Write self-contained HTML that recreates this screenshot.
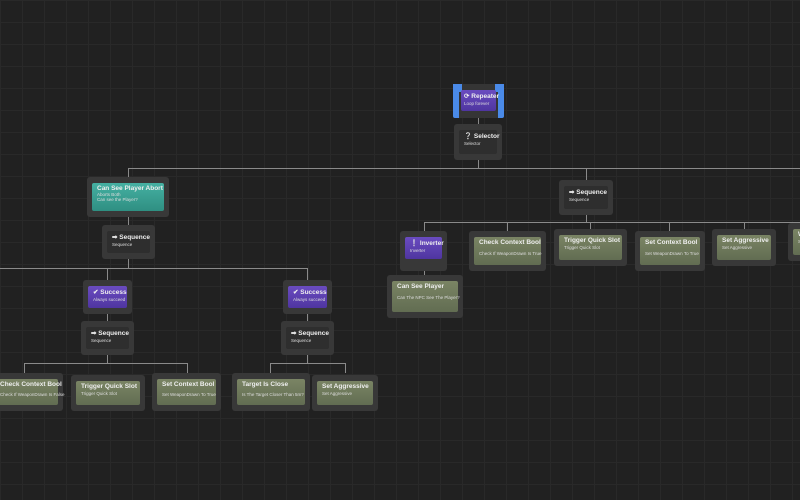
<!DOCTYPE html>
<html><head><meta charset="utf-8"><style>
body{margin:0;width:800px;height:500px;overflow:hidden;background:#212121;
background-image:linear-gradient(#292929 1px,transparent 1px),linear-gradient(90deg,#292929 1px,transparent 1px);
background-size:22px 22px;font-family:"Liberation Sans",sans-serif;position:relative}
.o{position:absolute;background:#383838;border-radius:3px}
.i{position:absolute;left:5px;right:5px;top:6px;bottom:6px;border-radius:2px;color:#eee;padding:2px 5px;box-sizing:border-box}
.t{font-size:6.5px;font-weight:bold;white-space:nowrap}
.s{font-size:4.5px;color:#ddd;white-space:nowrap;margin-top:1px}
.g{background:linear-gradient(#7a8464,#626d52)}
.d{background:#2e2e2e}
.p{background:linear-gradient(#6a4cc0,#4f35a0)}
.c{background:linear-gradient(#45b0a2,#2f8f82)}
.l{position:absolute;background:#8a8a8a}
</style></head><body>
<div class="l" style="left:478px;top:111px;width:1px;height:57px"></div>
<div class="l" style="left:128px;top:168px;width:672px;height:1px"></div>
<div class="l" style="left:128px;top:168px;width:1px;height:10px"></div>
<div class="l" style="left:586px;top:168px;width:1px;height:12px"></div>
<div class="l" style="left:128px;top:216px;width:1px;height:52px"></div>
<div class="l" style="left:0;top:268px;width:308px;height:1px"></div>
<div class="l" style="left:107px;top:268px;width:1px;height:12px"></div>
<div class="l" style="left:307px;top:268px;width:1px;height:12px"></div>
<div class="l" style="left:107px;top:313px;width:1px;height:50px"></div>
<div class="l" style="left:307px;top:313px;width:1px;height:50px"></div>
<div class="l" style="left:24px;top:363px;width:163px;height:1px"></div>
<div class="l" style="left:24px;top:363px;width:1px;height:10px"></div>
<div class="l" style="left:187px;top:363px;width:1px;height:10px"></div>
<div class="l" style="left:270px;top:363px;width:75px;height:1px"></div>
<div class="l" style="left:270px;top:363px;width:1px;height:10px"></div>
<div class="l" style="left:345px;top:363px;width:1px;height:10px"></div>
<div class="l" style="left:586px;top:214px;width:1px;height:8px"></div>
<div class="l" style="left:424px;top:222px;width:376px;height:1px"></div>
<div class="l" style="left:424px;top:222px;width:1px;height:10px"></div>
<div class="l" style="left:507px;top:222px;width:1px;height:10px"></div>
<div class="l" style="left:590px;top:222px;width:1px;height:8px"></div>
<div class="l" style="left:669px;top:222px;width:1px;height:10px"></div>
<div class="l" style="left:744px;top:222px;width:1px;height:8px"></div>
<div class="l" style="left:424px;top:262px;width:1px;height:14px"></div>

<div class="o" style="left:453px;top:84px;width:51px;height:34px;background:#353535;border-left:6px solid #4a8ae8;border-right:6px solid #4a8ae8;box-sizing:border-box;border-radius:2px">
<div style="position:absolute;left:-6px;top:0;width:9px;height:8px;background:#4a8ae8"></div>
<div style="position:absolute;right:-6px;top:0;width:9px;height:8px;background:#4a8ae8"></div>
<div class="i p" style="left:2px;right:2px;top:6px;bottom:7px;padding:2px 3px"><div class="t">⟳ Repeater</div><div class="s">Loop forever</div></div></div>
<div class="o" style="left:454px;top:124px;width:48px;height:36px"><div class="i d"><div class="t">❔ Selector</div><div class="s">Selector</div></div></div>

<div class="o" style="left:87px;top:177px;width:82px;height:40px"><div class="i c"><div class="t">Can See Player Abort</div><div class="s" style="margin:0">Aborts Both</div><div class="s" style="margin:0">Can see the Player?</div></div></div>
<div class="o" style="left:102px;top:225px;width:53px;height:34px"><div class="i d"><div class="t">➡ Sequence</div><div class="s">Sequence</div></div></div>

<div class="o" style="left:83px;top:280px;width:49px;height:34px"><div class="i p"><div class="t">✔ Success</div><div class="s">Always succeed</div></div></div>
<div class="o" style="left:283px;top:280px;width:49px;height:34px"><div class="i p"><div class="t">✔ Success</div><div class="s">Always succeed</div></div></div>
<div class="o" style="left:81px;top:321px;width:53px;height:34px"><div class="i d"><div class="t">➡ Sequence</div><div class="s">Sequence</div></div></div>
<div class="o" style="left:281px;top:321px;width:53px;height:34px"><div class="i d"><div class="t">➡ Sequence</div><div class="s">Sequence</div></div></div>

<div class="o" style="left:-10px;top:373px;width:73px;height:38px"><div class="i g"><div class="t">Check Context Bool</div><div class="s" style="margin-top:4px">Check If WeaponDrawn Is False</div></div></div>
<div class="o" style="left:71px;top:375px;width:74px;height:36px"><div class="i g"><div class="t">Trigger Quick Slot</div><div class="s">Trigger Quick Slot</div></div></div>
<div class="o" style="left:152px;top:373px;width:69px;height:38px"><div class="i g"><div class="t">Set Context Bool</div><div class="s" style="margin-top:4px">Set WeaponDrawn To True</div></div></div>
<div class="o" style="left:232px;top:373px;width:78px;height:38px"><div class="i g"><div class="t">Target Is Close</div><div class="s" style="margin-top:4px">Is The Target Closer Than 5m?</div></div></div>
<div class="o" style="left:312px;top:375px;width:66px;height:36px"><div class="i g"><div class="t">Set Aggressive</div><div class="s">Set Aggressive</div></div></div>

<div class="o" style="left:559px;top:180px;width:54px;height:35px"><div class="i d"><div class="t">➡ Sequence</div><div class="s">Sequence</div></div></div>
<div class="o" style="left:400px;top:231px;width:47px;height:40px"><div class="i p" style="bottom:12px"><div class="t">❕ Inverter</div><div class="s">Inverter</div></div></div>
<div class="o" style="left:387px;top:275px;width:76px;height:43px"><div class="i g"><div class="t">Can See Player</div><div class="s" style="margin-top:5px">Can The NPC See The Player?</div></div></div>
<div class="o" style="left:469px;top:231px;width:77px;height:40px"><div class="i g"><div class="t">Check Context Bool</div><div class="s" style="margin-top:5px">Check If WeaponDrawn Is True</div></div></div>
<div class="o" style="left:554px;top:229px;width:73px;height:37px"><div class="i g"><div class="t">Trigger Quick Slot</div><div class="s">Trigger Quick Slot</div></div></div>
<div class="o" style="left:635px;top:231px;width:70px;height:40px"><div class="i g"><div class="t">Set Context Bool</div><div class="s" style="margin-top:5px">Set WeaponDrawn To True</div></div></div>
<div class="o" style="left:712px;top:229px;width:64px;height:37px"><div class="i g"><div class="t">Set Aggressive</div><div class="s">Set Aggressive</div></div></div>
<div class="o" style="left:788px;top:223px;width:30px;height:38px"><div class="i g"><div class="t">W</div><div class="s">S</div></div></div>
</body></html>
